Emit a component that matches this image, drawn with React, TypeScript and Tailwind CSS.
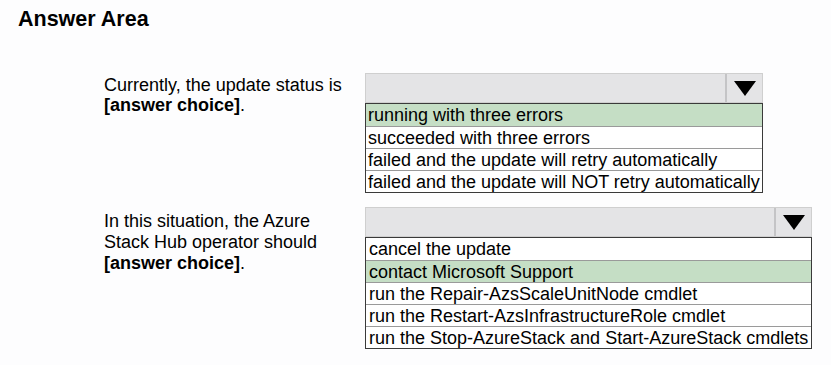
import React from "react";

type Question = {
  lines: string[];
  options: string[];
  selected: number;
  width: string;
  label: string;
  pad: string;
};

const questions: Question[] = [
  {
    lines: ["Currently, the update status is"],
    options: [
      "running with three errors",
      "succeeded with three errors",
      "failed and the update will retry automatically",
      "failed and the update will NOT retry automatically",
    ],
    selected: 0,
    width: "w-[398px]",
    label: "pt-[2px] leading-[20px]",
    pad: "pl-[2px]",
  },
  {
    lines: ["In this situation, the Azure", "Stack Hub operator should"],
    options: [
      "cancel the update",
      "contact Microsoft Support",
      "run the Repair-AzsScaleUnitNode cmdlet",
      "run the Restart-AzsInfrastructureRole cmdlet",
      "run the Stop-AzureStack and Start-AzureStack cmdlets",
    ],
    selected: 1,
    width: "w-[447px]",
    label: "pt-[4px] leading-[21px]",
    pad: "pl-[3px]",
  },
];

function Arrow() {
  return (
    <svg width="22" height="15" viewBox="0 0 22 15">
      <polygon points="0,0 22,0 11,15" fill="#000" />
    </svg>
  );
}

function Dropdown({ q }: { q: Question }) {
  return (
    <div className={q.width}>
      <div className="flex h-[30px] border border-[#cfcfcf] bg-[#e4e4e6]">
        <div className="flex-1" />
        <div className="flex w-[37px] items-center justify-center border-l-2 border-[#c4c4c6] pt-[1px]">
          <Arrow />
        </div>
      </div>
      <div className="border border-[#3a3a3a] bg-white">
        {q.options.map((o, i) => (
          <div
            key={o}
            className={
              "h-[22px] whitespace-nowrap text-[18px] leading-[22px] text-black " +
              q.pad +
              (i > 0 ? " border-t border-[#9a9a9a]" : "") +
              (i === q.selected ? " bg-[#c5dec5]" : "")
            }
          >
            {o}
          </div>
        ))}
      </div>
    </div>
  );
}

export default function App() {
  return (
    <div
      className="h-[365px] w-[831px] bg-[#fdfdfe] text-black"
      style={{ fontFamily: '"Liberation Sans", Arial, sans-serif' }}
    >
      <h1 className="pl-[18px] pt-[5px] text-[21.5px] font-bold leading-[28px]">Answer Area</h1>
      <div className="mt-[40px] flex flex-col gap-[14px]">
        {questions.map((q, qi) => (
          <div key={qi} className="flex">
            <div className={"w-[365px] whitespace-nowrap pl-[104px] text-[18px] " + q.label}>
              {q.lines.map((l) => (
                <div key={l}>{l}</div>
              ))}
              <div>
                <span className="font-bold">[answer choice]</span>.
              </div>
            </div>
            <Dropdown q={q} />
          </div>
        ))}
      </div>
    </div>
  );
}
